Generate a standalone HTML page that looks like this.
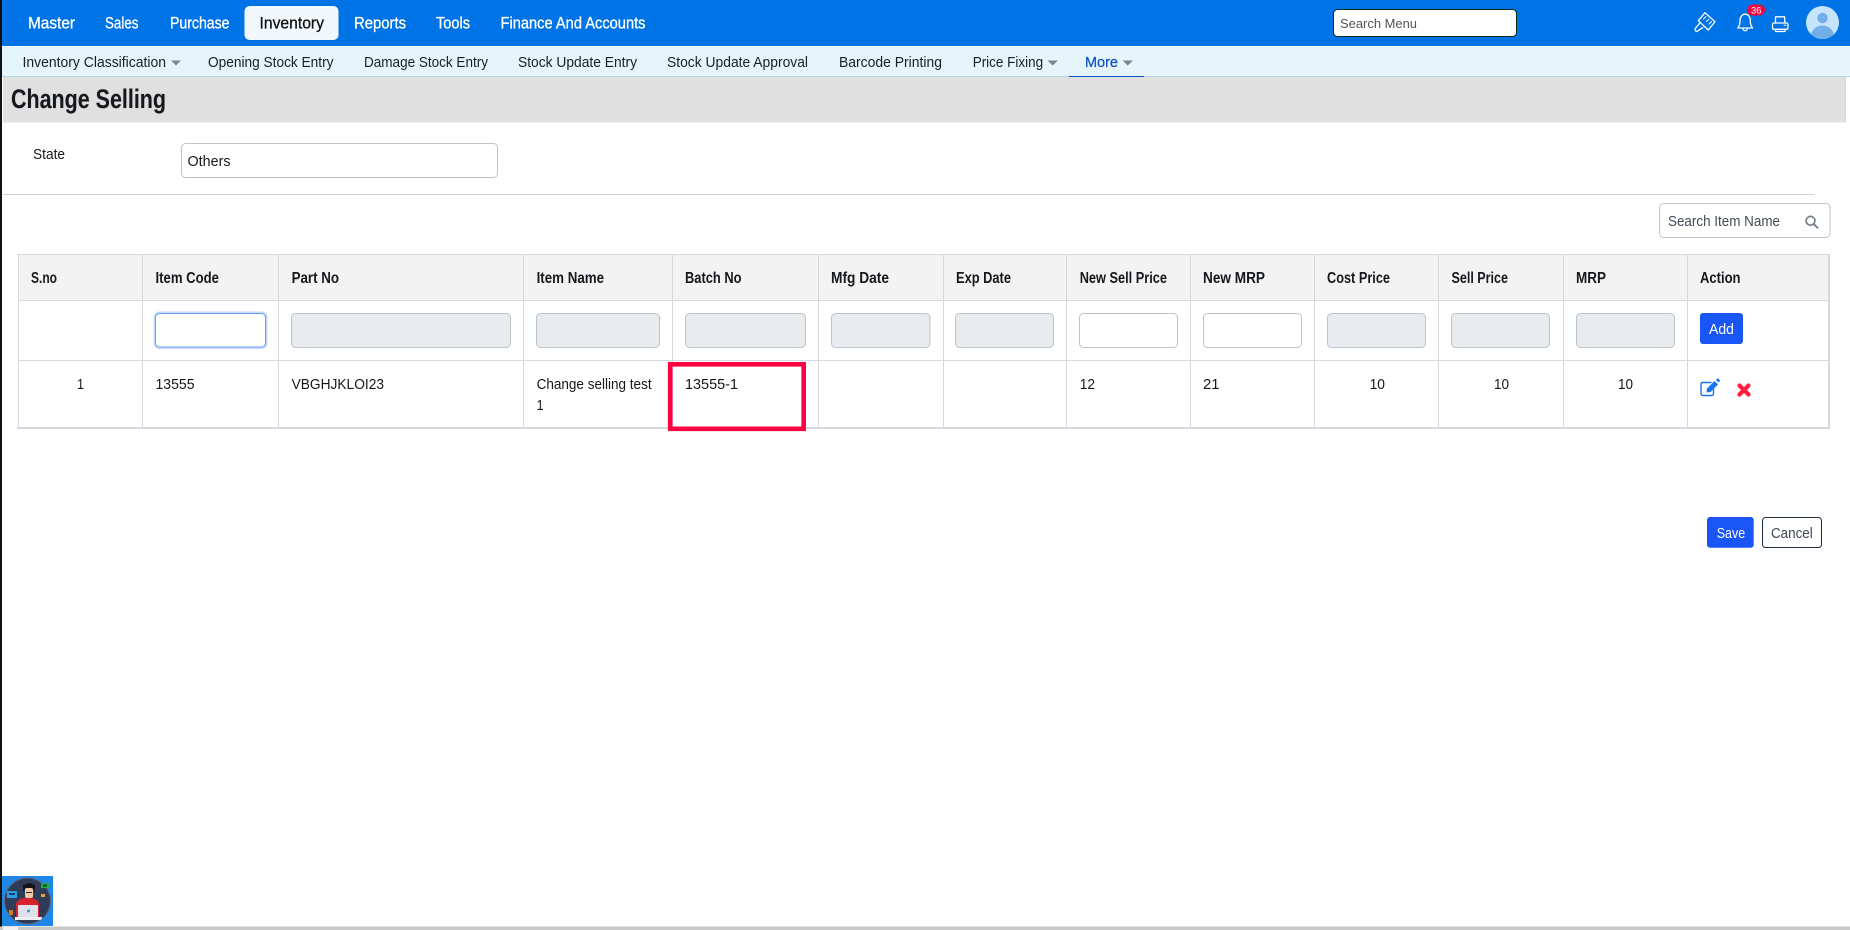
<!DOCTYPE html>
<html lang="en"><head><meta charset="utf-8"><title>Change Selling</title>
<style>
html,body{margin:0;padding:0;background:#fff;width:1850px;height:930px;overflow:hidden}
svg{display:block}
text{font-family:"Liberation Sans",sans-serif;font-size:14.5px;fill:#111}
.n{font-size:16.5px;fill:#fff;stroke:#fff;stroke-width:.3}
.s{font-size:15px;fill:#15202b}
.h{font-size:15.5px;font-weight:bold;fill:#15181c}
.r{font-size:15px;fill:#15181c}
.in{fill:#e9ecef;stroke:#bcc4cc;stroke-width:1}
.iw{fill:#fff;stroke:#bcc4cc;stroke-width:1}
.ic{fill:none;stroke:#fff;stroke-width:1.3;stroke-linejoin:round;stroke-linecap:round}
</style></head><body>
<svg width="1850" height="930" viewBox="0 0 1850 930" xmlns="http://www.w3.org/2000/svg">
<defs><clipPath id="av"><circle cx="1822.5" cy="22.5" r="16.5"/></clipPath><clipPath id="wc"><circle cx="27.5" cy="901" r="23"/></clipPath></defs>
<rect width="1850" height="930" fill="#fff"/>
<!-- top nav -->
<rect x="0" y="0" width="1850" height="46" fill="#0073e6"/>
<rect x="244.5" y="6" width="94" height="34" rx="5" fill="#f2f9fe"/>
<text class="n" x="28" y="28.5" textLength="47" lengthAdjust="spacingAndGlyphs">Master</text>
<text class="n" x="105" y="28.5" textLength="33.5" lengthAdjust="spacingAndGlyphs">Sales</text>
<text class="n" x="170" y="28.5" textLength="59.5" lengthAdjust="spacingAndGlyphs">Purchase</text>
<text class="n" x="259.5" y="28.5" textLength="64.5" lengthAdjust="spacingAndGlyphs" style="fill:#111;stroke:#111">Inventory</text>
<text class="n" x="354" y="28.5" textLength="52" lengthAdjust="spacingAndGlyphs">Reports</text>
<text class="n" x="436" y="28.5" textLength="34" lengthAdjust="spacingAndGlyphs">Tools</text>
<text class="n" x="500.5" y="28.5" textLength="145" lengthAdjust="spacingAndGlyphs">Finance And Accounts</text>
<rect x="1333.5" y="9.5" width="183" height="27" rx="4" fill="#fff" stroke="#0c2a12" stroke-width="1"/>
<text x="1340" y="28" textLength="77" lengthAdjust="spacingAndGlyphs" style="font-size:13px;fill:#555">Search Menu</text>
<!-- brush -->
<g class="ic">
<path d="M1705 12.7L1715 21.7L1708.3 30L1698.3 20.7Z"/>
<path d="M1706 16.5L1703.5 19M1709 19L1706.5 21.5M1711.5 21.5L1709 24" stroke-width="1"/>
<path d="M1700 22.8L1695.2 28.6Q1694.6 30.6 1696.7 31.6L1702.8 27.6"/>
</g>
<!-- bell -->
<path class="ic" d="M1737.7 28H1752.6C1750.5 25.5 1750.3 23.5 1750.3 20.5C1750.3 17 1748.2 14.2 1745.2 14.2C1742.2 14.2 1740 17 1740 20.5C1740 23.5 1739.8 25.5 1737.7 28Z"/>
<path class="ic" d="M1743 28.5C1743 31.5 1747.4 31.5 1747.4 28.5"/>
<rect x="1747" y="4.5" width="18" height="11" rx="5.5" fill="#f5053f"/>
<text x="1751" y="13.3" textLength="10.5" lengthAdjust="spacingAndGlyphs" style="font-size:9.5px;fill:#fff">36</text>
<!-- printer -->
<g class="ic">
<path d="M1775.5 23V16.8H1784.5L1785 23"/><rect x="1772.5" y="23" width="15.5" height="6.3" rx="1.5"/><path d="M1775.5 29.3V31.5H1785V29.3"/><path d="M1784 25.3H1786" stroke-width="1"/>
</g>
<!-- avatar -->
<circle cx="1822.5" cy="22.5" r="16.5" fill="#c6e4fc"/>
<g clip-path="url(#av)"><circle cx="1822.5" cy="18" r="5.2" fill="#74aee9"/><ellipse cx="1822.5" cy="36" rx="11.5" ry="10.5" fill="#74aee9"/></g>
<!-- sub nav -->
<rect x="0" y="46" width="1850" height="1" fill="#fff"/>
<rect x="0" y="47" width="1850" height="29" fill="#e6f4fb"/>
<rect x="0" y="76" width="1850" height="1" fill="#b6d5e6"/>
<text class="s" x="22.5" y="67" textLength="143.5" lengthAdjust="spacingAndGlyphs">Inventory Classification</text>
<path d="M171 60.5H181L176 65.5Z" fill="#7d868e"/>
<text class="s" x="208" y="67" textLength="125.5" lengthAdjust="spacingAndGlyphs">Opening Stock Entry</text>
<text class="s" x="364" y="67" textLength="124" lengthAdjust="spacingAndGlyphs">Damage Stock Entry</text>
<text class="s" x="518" y="67" textLength="119" lengthAdjust="spacingAndGlyphs">Stock Update Entry</text>
<text class="s" x="667" y="67" textLength="141" lengthAdjust="spacingAndGlyphs">Stock Update Approval</text>
<text class="s" x="839" y="67" textLength="103" lengthAdjust="spacingAndGlyphs">Barcode Printing</text>
<text class="s" x="972.7" y="67" textLength="70.5" lengthAdjust="spacingAndGlyphs">Price Fixing</text>
<path d="M1047.5 60.5H1058L1052.7 65.5Z" fill="#7d868e"/>
<text class="s" x="1085" y="67" textLength="33" lengthAdjust="spacingAndGlyphs" style="fill:#0b50c8;stroke:#0b50c8;stroke-width:.25">More</text>
<path d="M1122.5 60.5H1133L1127.7 65.5Z" fill="#7d868e"/>
<rect x="1069" y="76" width="75" height="2" fill="#0b50c8"/>
<!-- title bar -->
<rect x="3" y="77" width="1842" height="45.5" fill="#e0e0e0"/>
<rect x="1845" y="77" width="1" height="45.5" fill="#d8d8d8"/>
<text x="11" y="108" textLength="155" lengthAdjust="spacingAndGlyphs" style="font-size:27px;font-weight:bold;fill:#15181c;filter:drop-shadow(.5px .5px .5px rgba(0,0,0,.18))">Change Selling</text>
<!-- state -->
<text class="r" x="33" y="159" textLength="32" lengthAdjust="spacingAndGlyphs">State</text>
<rect x="181.5" y="143.5" width="316" height="34" rx="4" class="iw"/>
<text class="r" x="187.5" y="166" textLength="43" lengthAdjust="spacingAndGlyphs">Others</text>
<rect x="3" y="194" width="1812" height="1" fill="#ced4da"/>
<!-- item search -->
<rect x="1659.5" y="203.5" width="170.5" height="34" rx="4" class="iw"/>
<text class="r" x="1668" y="226" textLength="112" lengthAdjust="spacingAndGlyphs" style="fill:#414d59">Search Item Name</text>
<circle cx="1810.5" cy="220.8" r="4.4" fill="none" stroke="#77818b" stroke-width="1.7"/><path d="M1814 224.3L1817.5 227.8" stroke="#77818b" stroke-width="2" stroke-linecap="round"/>
<!-- table -->
<rect x="18" y="254" width="1811" height="46" fill="#f3f3f3"/>
<g fill="#d3d9de">
<rect x="17" y="254" width="1813" height="1"/><rect x="18" y="300" width="1811" height="1"/><rect x="18" y="360" width="1811" height="1"/>
<rect x="17" y="427" width="1813" height="2"/>
<rect x="18" y="254" width="1" height="174"/><rect x="1828" y="254" width="2" height="174"/>
<rect x="142" y="254" width="1" height="174"/><rect x="278" y="254" width="1" height="174"/><rect x="523" y="254" width="1" height="174"/>
<rect x="672" y="254" width="1" height="174"/><rect x="818" y="254" width="1" height="174"/><rect x="943" y="254" width="1" height="174"/>
<rect x="1066" y="254" width="1" height="174"/><rect x="1190" y="254" width="1" height="174"/><rect x="1314" y="254" width="1" height="174"/>
<rect x="1438" y="254" width="1" height="174"/><rect x="1563" y="254" width="1" height="174"/><rect x="1687" y="254" width="1" height="174"/>
</g>
<g class="hd">
<text class="h" x="31" y="283" textLength="26" lengthAdjust="spacingAndGlyphs">S.no</text>
<text class="h" x="155.5" y="283" textLength="63.5" lengthAdjust="spacingAndGlyphs">Item Code</text>
<text class="h" x="291.6" y="283" textLength="47.5" lengthAdjust="spacingAndGlyphs">Part No</text>
<text class="h" x="536.6" y="283" textLength="67.5" lengthAdjust="spacingAndGlyphs">Item Name</text>
<text class="h" x="685" y="283" textLength="56.5" lengthAdjust="spacingAndGlyphs">Batch No</text>
<text class="h" x="831" y="283" textLength="58" lengthAdjust="spacingAndGlyphs">Mfg Date</text>
<text class="h" x="956" y="283" textLength="55" lengthAdjust="spacingAndGlyphs">Exp Date</text>
<text class="h" x="1079.7" y="283" textLength="87.3" lengthAdjust="spacingAndGlyphs">New Sell Price</text>
<text class="h" x="1203" y="283" textLength="62" lengthAdjust="spacingAndGlyphs">New MRP</text>
<text class="h" x="1327" y="283" textLength="63" lengthAdjust="spacingAndGlyphs">Cost Price</text>
<text class="h" x="1451.5" y="283" textLength="56.5" lengthAdjust="spacingAndGlyphs">Sell Price</text>
<text class="h" x="1576" y="283" textLength="30" lengthAdjust="spacingAndGlyphs">MRP</text>
<text class="h" x="1700" y="283" textLength="40.5" lengthAdjust="spacingAndGlyphs">Action</text>
</g>
<!-- filter row -->
<rect x="153.5" y="311.5" width="114" height="37.5" rx="6" fill="#c4d9fc"/>
<rect x="155.5" y="313.5" width="110" height="33.5" rx="4" fill="#fff" stroke="#6b9fea" stroke-width="1"/>
<rect x="291.5" y="313.5" width="219" height="34" rx="4" class="in"/>
<rect x="536.5" y="313.5" width="123" height="34" rx="4" class="in"/>
<rect x="685.5" y="313.5" width="120" height="34" rx="4" class="in"/>
<rect x="831.5" y="313.5" width="98.5" height="34" rx="4" class="in"/>
<rect x="955.5" y="313.5" width="98" height="34" rx="4" class="in"/>
<rect x="1079.5" y="313.5" width="98" height="34" rx="4" class="iw"/>
<rect x="1203.5" y="313.5" width="98" height="34" rx="4" class="iw"/>
<rect x="1327.5" y="313.5" width="98" height="34" rx="4" class="in"/>
<rect x="1451.5" y="313.5" width="98" height="34" rx="4" class="in"/>
<rect x="1576.5" y="313.5" width="98" height="34" rx="4" class="in"/>
<rect x="1700" y="313" width="43" height="31" rx="3" fill="#1a56f5"/>
<text x="1709" y="334" textLength="25" lengthAdjust="spacingAndGlyphs" style="font-size:14.5px;fill:#fff">Add</text>
<!-- data row -->
<text class="r" x="77" y="389" textLength="7" lengthAdjust="spacingAndGlyphs">1</text>
<text class="r" x="155.5" y="389" textLength="39" lengthAdjust="spacingAndGlyphs">13555</text>
<text class="r" x="291.6" y="389" textLength="92.4" lengthAdjust="spacingAndGlyphs">VBGHJKLOI23</text>
<text class="r" x="536.6" y="389" textLength="115" lengthAdjust="spacingAndGlyphs">Change selling test</text>
<text class="r" x="536.6" y="410" textLength="7" lengthAdjust="spacingAndGlyphs">1</text>
<text class="r" x="685" y="389" textLength="53" lengthAdjust="spacingAndGlyphs">13555-1</text>
<text class="r" x="1079.7" y="389" textLength="15.3" lengthAdjust="spacingAndGlyphs">12</text>
<text class="r" x="1203" y="389" textLength="16.5" lengthAdjust="spacingAndGlyphs">21</text>
<text class="r" x="1369.6" y="389" textLength="15.4" lengthAdjust="spacingAndGlyphs">10</text>
<text class="r" x="1494" y="389" textLength="15" lengthAdjust="spacingAndGlyphs">10</text>
<text class="r" x="1618" y="389" textLength="15" lengthAdjust="spacingAndGlyphs">10</text>
<rect x="670.2" y="364.3" width="133.5" height="64.5" fill="none" stroke="#ff0040" stroke-width="4.6"/>
<!-- edit icon -->
<path d="M1713.5 386V393.5Q1713.5 395.5 1711.5 395.5H1703Q1701 395.5 1701 393.5V384.5Q1701 382.5 1703 382.5H1711" fill="none" stroke="#1a73f0" stroke-width="1.4" stroke-linecap="round"/>
<path d="M1706.5 392.5L1707 388.5L1714.5 381L1718 384.5L1710.5 392Z" fill="#1a73f0"/>
<path d="M1715.8 380L1717 378.8Q1717.8 378.2 1718.6 378.8L1719.6 379.9Q1720.2 380.7 1719.5 381.5L1718.8 382.5Z" fill="#1a73f0"/>
<!-- delete icon -->
<path d="M1739.5 385.5L1748.5 394.5M1748.5 385.5L1739.5 394.5" stroke="#ff1f3d" stroke-width="4.2" stroke-linecap="round"/>
<!-- buttons -->
<rect x="1707" y="517" width="46.7" height="30.7" rx="3" fill="#1a56f5"/>
<text x="1716.7" y="538" textLength="28.5" lengthAdjust="spacingAndGlyphs" style="font-size:14.5px;fill:#fff">Save</text>
<rect x="1762.5" y="517.5" width="59" height="30" rx="3" fill="#fff" stroke="#1f2d3d" stroke-width="1"/>
<text x="1771" y="538" textLength="41.7" lengthAdjust="spacingAndGlyphs" style="font-size:15px;fill:#3c4858">Cancel</text>
<!-- left edge / bottom -->
<rect x="0" y="0" width="2" height="926.5" fill="#111"/>
<rect x="0" y="926.5" width="1850" height="3.5" fill="#c9c9c9"/>
<rect x="3" y="927" width="15" height="3" fill="#f2f2f2"/>
<!-- support widget -->
<rect x="2" y="876" width="51" height="50" fill="#1e87e8"/>
<circle cx="27.5" cy="901" r="23.5" fill="#5c6675"/>
<circle cx="27.5" cy="901" r="22.5" fill="#2f3c58"/>
<g clip-path="url(#wc)">
<path d="M16 918V905Q16 900 24 898H32Q39 900 39 905V918Z" fill="#d8212f"/>
<rect x="25" y="888" width="8" height="10" rx="2" fill="#f1c7a6"/>
<path d="M23 892V885L30 883L35 885V892L32.5 888H25.5Z" fill="#14141a"/>
<rect x="26" y="892" width="6" height="1" fill="#333"/>
<rect x="18" y="905" width="20" height="12" rx="1" fill="#dfe3e9"/>
<circle cx="28.5" cy="911" r="1.5" fill="#3f8fe0"/>
<rect x="15" y="917" width="27" height="3" fill="#eef0f4"/>
<rect x="9" y="910" width="4" height="5" fill="#d9782d"/>
</g>
<rect x="7" y="891" width="10" height="7" fill="#2d9be0"/><rect x="9" y="893" width="6" height="2" fill="#14457a"/>
<rect x="41" y="883" width="8" height="5" fill="#1fae4b"/><rect x="43" y="884.5" width="4" height="2" fill="#0c4a22"/>
<rect x="41" y="894" width="4" height="3" fill="#e8a045"/>
</svg>
</body></html>
